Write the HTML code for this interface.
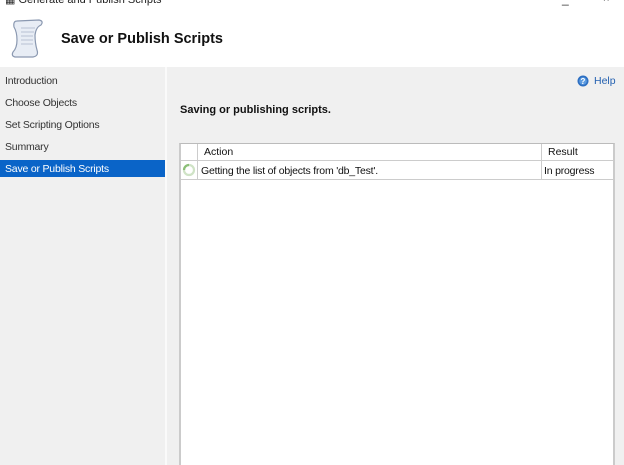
<!DOCTYPE html>
<html style="overflow:hidden;height:465px"><head><style>
*{margin:0;padding:0;box-sizing:border-box}
body{width:624px;height:465px;overflow:hidden;background:#fff;font-family:"Liberation Sans",Arial,sans-serif;font-size:11px;color:#111;position:relative}
.abs{position:absolute}
.nav div{position:absolute;left:0;width:165px;height:17px;padding-left:5px;line-height:17px;color:#333;font-size:10.5px;letter-spacing:-0.2px}
</style></head><body>
<div class="abs" style="left:5px;top:-7px;font-size:11px;color:#222">&#9638; Generate and Publish Scripts</div>
<div class="abs" style="left:562px;top:-8px;font-size:12px;color:#333">_</div>
<div class="abs" style="left:603px;top:-7px;font-size:11px;color:#333">×</div>
<svg class="abs" style="left:9px;top:18px" width="36" height="42" viewBox="0 0 36 42">
<path d="M8 3 Q4 3 5 9 Q8 14 8 22 Q8 30 4 34 Q2 38 6 39 L24 39 Q30 38 28 32 Q26 25 26 17 Q27 9 32 7 Q35 3 30 2 Z" fill="#e8edf5" stroke="#8a98b0" stroke-width="1.2"/>
<path d="M12 10 H26 M12 14 H25 M12 18 H24 M12 22 H24 M12 26 H24" stroke="#b7c1d2" stroke-width="1"/>
</svg>
<div class="abs" style="left:61px;top:31px;font-size:14.5px;font-weight:bold;color:#111">Save or Publish Scripts</div>
<div class="abs" style="left:0;top:67px;width:165px;height:398px;background:#f0f0f0"></div>
<div class="abs" style="left:165px;top:67px;width:2px;height:398px;background:#fafafa"></div>
<div class="abs" style="left:167px;top:67px;width:457px;height:398px;background:#f0f0f0"></div>
<div class="nav">
<div style="top:73px">Introduction</div>
<div style="top:95px">Choose Objects</div>
<div style="top:117px">Set Scripting Options</div>
<div style="top:139px">Summary</div>
<div style="top:160px;background:#0a64c8;color:#fff;line-height:18px">Save or Publish Scripts</div>
</div>
<svg class="abs" style="left:577px;top:75px" width="12" height="12"><circle cx="6" cy="6" r="5.5" fill="#2d6fc2"/><circle cx="6" cy="6" r="3.8" fill="#5c9be0"/><text x="6" y="9" font-size="8" font-weight="bold" fill="#fff" text-anchor="middle" font-family="Liberation Sans">?</text></svg>
<div class="abs" style="left:594px;top:75px;color:#2360b0;font-size:10.5px">Help</div>
<div class="abs" style="left:180px;top:104px;font-weight:bold;font-size:11px">Saving or publishing scripts.</div>
<div class="abs" style="left:179px;top:143px;width:436px;height:330px;background:#fff;border:2px solid #cbcbcb;border-top:1px solid #bbb;border-bottom:none"></div>
<div class="abs" style="left:181px;top:160px;width:432px;height:1px;background:#ccc"></div>
<div class="abs" style="left:181px;top:179px;width:432px;height:1px;background:#ccc"></div>
<div class="abs" style="left:197px;top:144px;width:1px;height:35px;background:#ccc"></div>
<div class="abs" style="left:541px;top:144px;width:1px;height:35px;background:#ccc"></div>
<div class="abs" style="left:204px;top:146px;font-size:10.5px">Action</div>
<div class="abs" style="left:548px;top:146px;font-size:10.5px">Result</div>
<svg class="abs" style="left:182px;top:163px" width="14" height="14"><circle cx="7" cy="7" r="5" fill="none" stroke="#cfe3c6" stroke-width="2.2"/><path d="M7 2 A5 5 0 0 0 2 7" fill="none" stroke="#8cbf78" stroke-width="2.2"/></svg>
<div class="abs" style="left:201px;top:165px;font-size:10.5px;letter-spacing:-0.2px">Getting the list of objects from 'db_Test'.</div>
<div class="abs" style="left:544px;top:165px;font-size:10.5px;letter-spacing:-0.2px">In progress</div>
</body></html>
